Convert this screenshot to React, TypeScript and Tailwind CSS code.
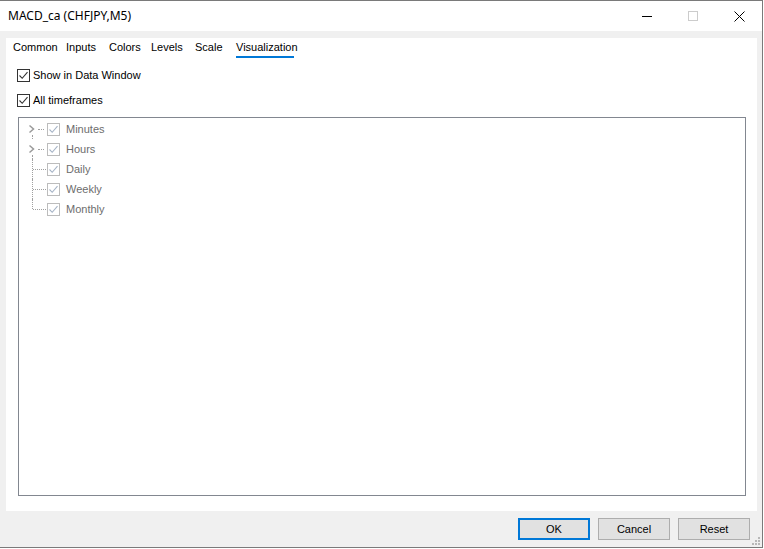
const titleFont = { fontFamily: '"Noto Sans", "Open Sans", sans-serif' }
const uiFont = { fontFamily: '"Liberation Sans", Arial, sans-serif' }

const tabs = [
  { label: "Common", w: "w-[53px]" },
  { label: "Inputs", w: "w-[43px]" },
  { label: "Colors", w: "w-[42px]" },
  { label: "Levels", w: "w-[44px]" },
  { label: "Scale", w: "w-[41px]" },
  { label: "Visualization", w: "w-[58px]" },
]

const periods = [
  { label: "Minutes", expand: true },
  { label: "Hours", expand: true },
  { label: "Daily", expand: false },
  { label: "Weekly", expand: false },
  { label: "Monthly", expand: false },
]

function Check({ disabled }: { disabled?: boolean }) {
  return (
    <span
      className={`w-[13px] h-[13px] border flex items-center justify-center shrink-0 bg-white ${
        disabled ? "border-[#bcbcbc]" : "border-[#333333]"
      }`}
    >
      <svg width="11" height="11" viewBox="0 0 11 11">
        <path
          d="M1.5 5.5 L4.2 8.3 L9.5 2.2"
          fill="none"
          stroke={disabled ? "#a6b4c6" : "#333333"}
          strokeWidth="1.1"
        />
      </svg>
    </span>
  )
}

function Button({ label, primary }: { label: string; primary?: boolean }) {
  return (
    <button
      className={`w-[72px] h-[22px] bg-[#e1e1e1] text-[11px] text-black flex items-center justify-center ${
        primary ? "border-2 border-[#0078d7]" : "border border-[#adadad]"
      }`}
    >
      {label}
    </button>
  )
}

export default function App() {
  return (
    <div className="w-[764px] h-[549px] bg-white" style={uiFont}>
      <div className="relative w-[763px] h-[548px] border-t border-r border-b border-[#7a7a7a] flex flex-col bg-[#f0f0f0]">
        {/* Title bar */}
        <div className="h-[30px] bg-white flex items-center shrink-0">
          <span className="pl-2 text-[12px] text-black" style={titleFont}>
            MACD_ca (CHFJPY,M5)
          </span>
          <div className="ml-auto flex h-full">
            <div className="w-[46px] flex items-center justify-center">
              <span className="w-[10px] h-px bg-black" />
            </div>
            <div className="w-[46px] flex items-center justify-center">
              <span className="w-[10px] h-[10px] border border-[#cccccc]" />
            </div>
            <div className="w-[46px] flex items-center justify-center">
              <svg width="11" height="11" viewBox="0 0 11 11">
                <path d="M0.5 0.5 L10.5 10.5 M10.5 0.5 L0.5 10.5" stroke="#000" strokeWidth="1" />
              </svg>
            </div>
          </div>
        </div>

        {/* Content panel */}
        <div className="mt-[7px] ml-[6px] mr-[5px] h-[473px] shrink-0 bg-white flex flex-col pl-[12px] pr-[11px]">
          <div className="flex ml-[-5px] pt-[1px] h-[20px] text-[11px] text-black">
            {tabs.map((t) => (
              <span key={t.label} className={`${t.w} shrink-0 h-[19px] flex flex-col`}>
                <span className="leading-[17px]">{t.label}</span>
                {t.label === "Visualization" ? (
                  <span className="mt-auto h-[2px] w-[58px] bg-[#0078d7]" />
                ) : null}
              </span>
            ))}
          </div>

          <div className="flex items-center gap-[3px] mt-[11px] ml-[-1px] h-[13px] text-[11px] text-black">
            <Check />
            <span>Show in Data Window</span>
          </div>
          <div className="flex items-center gap-[3px] mt-[12px] ml-[-1px] h-[13px] text-[11px] text-black">
            <Check />
            <span>All timeframes</span>
          </div>

          {/* Tree */}
          <div className="mt-[10px] h-[379px] border border-[#828790] bg-white pt-[1px] pl-[9px]">
            {periods.map((p, i) => (
              <div key={p.label} className="flex items-center h-[20px] text-[11px] text-[#6d6d6d]">
                <span className="w-[18px] h-[20px] relative shrink-0">
                  {p.expand ? (
                    <svg className="absolute left-0 top-[5px]" width="8" height="10" viewBox="0 0 8 10">
                      <path d="M1.5 1.5 L5.5 5 L1.5 8.5" fill="none" stroke="#9a9a9a" strokeWidth="1.5" />
                    </svg>
                  ) : null}
                  {p.expand ? (
                    <span className="absolute left-[4px] top-[16px] h-[4px] w-0 border-l border-dotted border-[#a0a0a0]" />
                  ) : (
                    <span
                      className={`absolute left-[4px] top-0 w-0 border-l border-dotted border-[#a0a0a0] ${
                        i === periods.length - 1 ? "h-[10px]" : "h-[20px]"
                      }`}
                    />
                  )}
                  {p.expand ? (
                    <span className="absolute left-[10px] top-[10px] w-[6px] border-t border-dotted border-[#a0a0a0]" />
                  ) : (
                    <span className="absolute left-[5px] top-[10px] w-[13px] border-t border-dotted border-[#a0a0a0]" />
                  )}
                </span>
                <span className="ml-[1px]">
                  <Check disabled />
                </span>
                <span className="ml-[6px]">{p.label}</span>
              </div>
            ))}
          </div>
        </div>

        {/* Buttons */}
        <div className="flex justify-end gap-[8px] mt-[7px] mr-[12px]">
          <Button label="OK" primary />
          <Button label="Cancel" />
          <Button label="Reset" />
        </div>

        {/* Size grip */}
        <svg className="absolute right-[1px] bottom-[1px]" width="10" height="10" viewBox="0 0 10 10">
          <rect x="7" y="1" width="2" height="2" fill="#b8b8b8" />
          <rect x="4" y="4" width="2" height="2" fill="#b8b8b8" />
          <rect x="7" y="4" width="2" height="2" fill="#b8b8b8" />
          <rect x="1" y="7" width="2" height="2" fill="#b8b8b8" />
          <rect x="4" y="7" width="2" height="2" fill="#b8b8b8" />
          <rect x="7" y="7" width="2" height="2" fill="#b8b8b8" />
        </svg>
      </div>
    </div>
  )
}
